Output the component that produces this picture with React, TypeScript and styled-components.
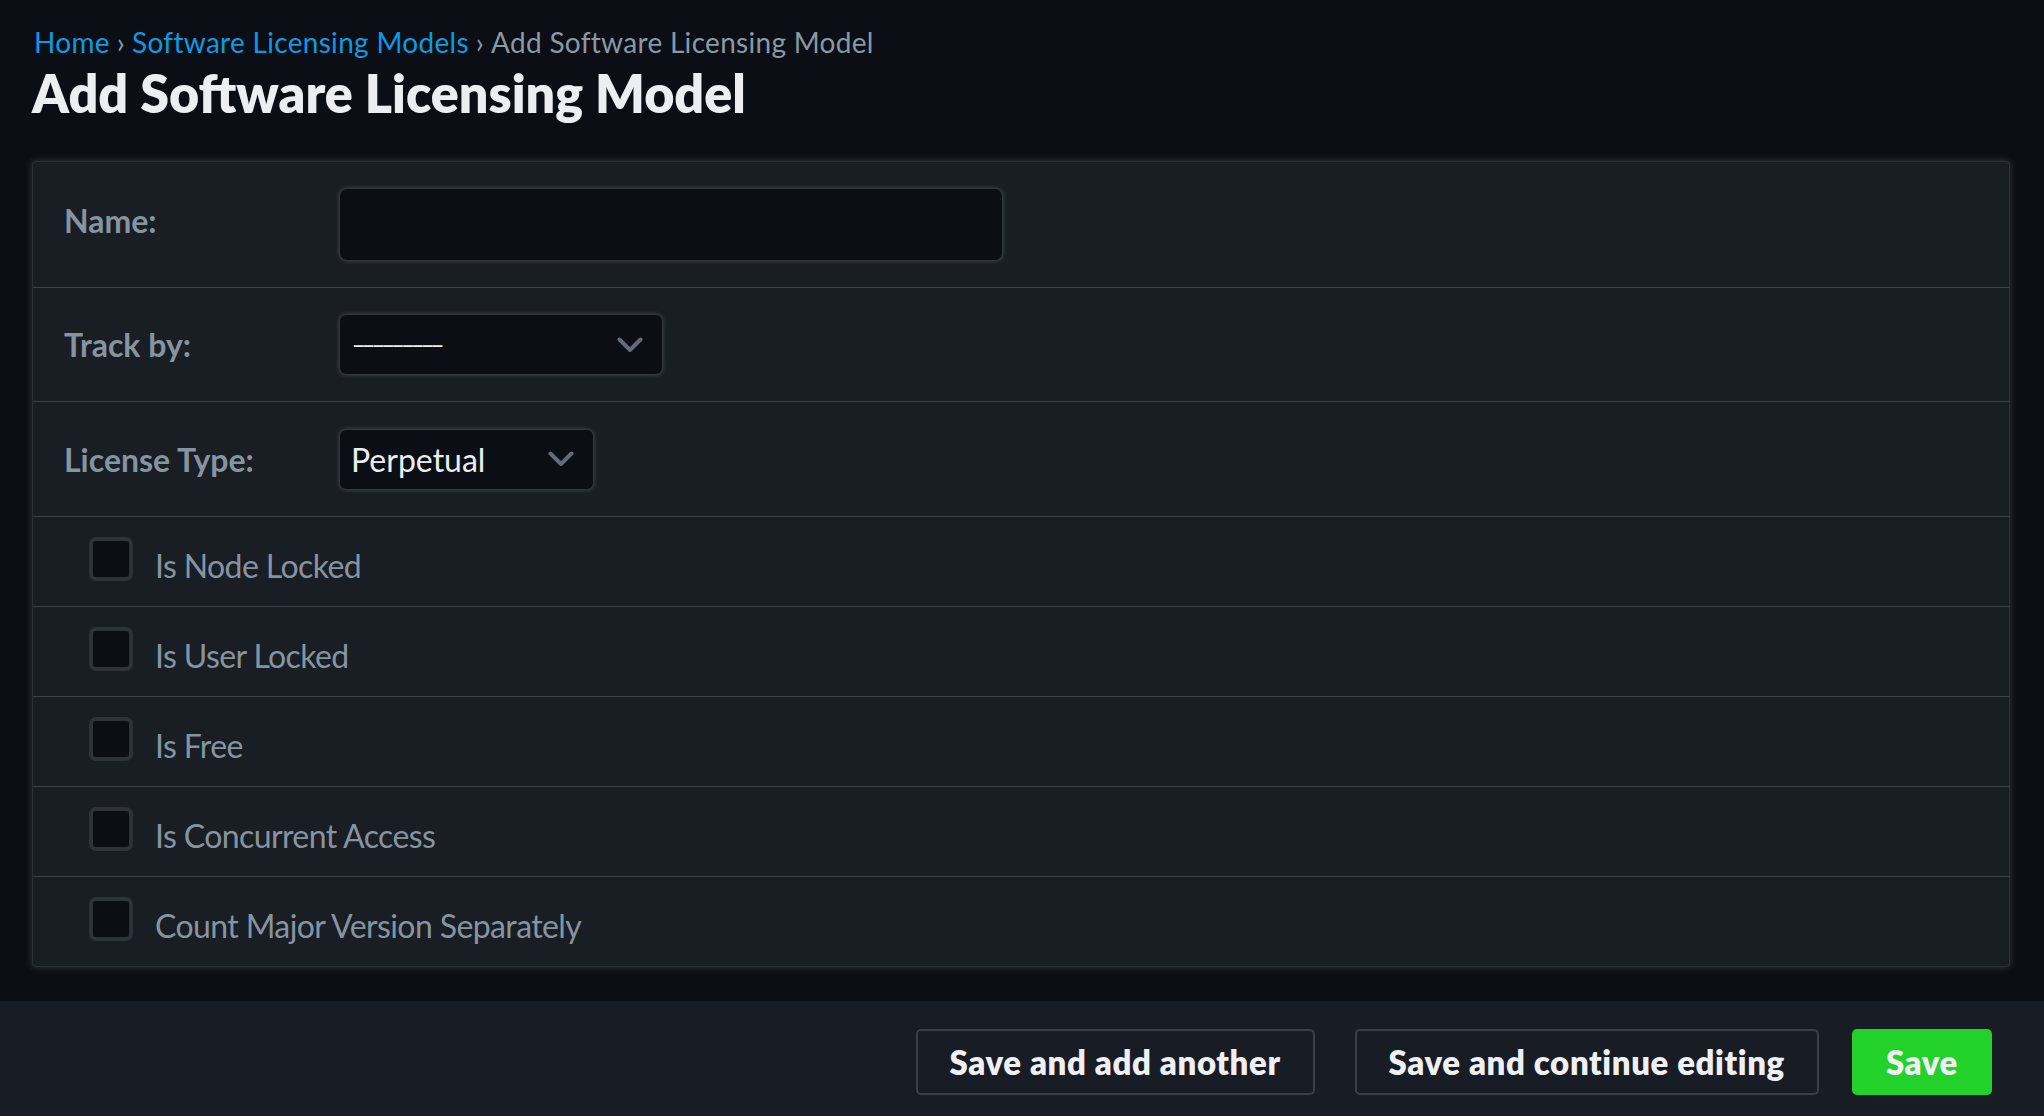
import React from "react";
import { styled, createGlobalStyle } from "styled-components";

const GlobalStyle = createGlobalStyle`
  html, body {
    margin: 0;
    padding: 0;
    background: #0b0e14;
  }
  body {
    font-family: "Lato", "Noto Sans", sans-serif;
    color: #eceef1;
  }
  * { box-sizing: border-box; }
`;

const Page = styled.div`
  min-height: 100vh;
  display: flex;
  flex-direction: column;
`;

const Header = styled.header`
  padding: 26px 32px 0 32px;
`;

const Breadcrumbs = styled.nav`
  font-size: 28px;
  line-height: 32px;
  letter-spacing: 0.3px;
  color: #8b98a5;
  padding-left: 2px;
`;

const Crumb = styled.a`
  color: #0c9be3;
  text-decoration: none;
`;

const Sep = styled.span`
  margin: 0 7px;
  color: #8b98a5;
`;

const Title = styled.h1`
  margin: 4px 0 0 0;
  font-size: 52px;
  line-height: 62px;
  font-weight: 800;
  color: #eceef1;
`;

const Card = styled.section`
  margin: 37px 34px 0 32px;
  background: #191d24;
  border: 1px solid #2c3038;
  border-radius: 4px;
  box-shadow: 0 0 6px 1px rgba(70, 74, 82, 0.55);
`;

const FieldRow = styled.div<{ $height: number }>`
  display: flex;
  align-items: center;
  height: ${({ $height }) => $height}px;
  padding-left: 31px;
  & + & {
    border-top: 1px solid #3d414a;
  }
`;

const Label = styled.label<{ $raise?: number }>`
  width: 276px;
  font-size: 32px;
  font-weight: 700;
  color: #8694a0;
  margin-top: ${({ $raise }) => -($raise ?? 0)}px;
`;

const TextInput = styled.input`
  width: 662px;
  height: 71px;
  background: #0b0e14;
  border: none;
  border-radius: 7px;
  box-shadow: 0 0 4px 1px rgba(120, 125, 135, 0.45);
  outline: none;
  color: #eceef1;
  font-size: 30px;
  padding: 0 12px;
`;

const SelectBox = styled.div<{ $width: number }>`
  width: ${({ $width }) => $width}px;
  height: 59px;
  display: flex;
  align-items: center;
  justify-content: space-between;
  padding: 0 19px 0 11px;
  background: #0b0e14;
  border-radius: 6px;
  box-shadow: 0 0 4px 1px rgba(120, 125, 135, 0.45);
  font-size: 32px;
  color: #eceef1;
  cursor: pointer;
`;

const Dashes = styled.span`
  font-size: 42px;
  font-weight: 300;
  letter-spacing: -5.7px;
  margin-top: -6px;
`;

const CheckRow = styled.div`
  display: flex;
  align-items: center;
  gap: 22px;
  height: 90px;
  padding-left: 56px;
  border-top: 1px solid #3d414a;
`;

const Checkbox = styled.input.attrs({ type: "checkbox" })`
  appearance: none;
  margin: 0;
  width: 44px;
  height: 44px;
  background: #0b0e14;
  border: 4px solid #2e323a;
  border-radius: 7px;
  flex-shrink: 0;
  position: relative;
  top: -3px;
`;

const CheckLabel = styled.label`
  font-size: 32px;
  color: #8694a0;
  letter-spacing: -0.6px;
  padding-top: 8px;
`;

const Footer = styled.footer`
  margin-top: 34px;
  flex: 1;
  min-height: 117px;
  background: #181c24;
  display: flex;
  justify-content: flex-end;
  align-items: flex-start;
  padding: 28px 52px 0 0;
`;

const Button = styled.button<{ $primary?: boolean }>`
  height: 66px;
  padding: 0 32px;
  margin-left: ${({ $primary }) => ($primary ? 33 : 40)}px;
  font-family: "Lato", "Noto Sans", sans-serif;
  font-size: 33px;
  font-weight: 800;
  letter-spacing: 0.6px;
  color: #eef0f3;
  background: ${({ $primary }) => ($primary ? "#22d12a" : "#181c24")};
  border: 2px solid ${({ $primary }) => ($primary ? "#22d12a" : "#3a3e46")};
  border-radius: 5px;
  cursor: pointer;
`;

const Chevron = () => (
  <svg width="26" height="16" viewBox="0 0 26 16" fill="none">
    <polyline
      points="2.5,2.5 13,13 23.5,2.5"
      stroke="#626b77"
      strokeWidth="4"
      strokeLinecap="round"
      strokeLinejoin="round"
    />
  </svg>
);

const checks = [
  "Is Node Locked",
  "Is User Locked",
  "Is Free",
  "Is Concurrent Access",
  "Count Major Version Separately",
];

export default function App() {
  return (
    <Page>
      <GlobalStyle />
      <Header>
        <Breadcrumbs>
          <Crumb href="#">Home</Crumb>
          <Sep>›</Sep>
          <Crumb href="#">Software Licensing Models</Crumb>
          <Sep>›</Sep>
          Add Software Licensing Model
        </Breadcrumbs>
        <Title>Add Software Licensing Model</Title>
      </Header>

      <Card>
        <FieldRow $height={125}>
          <Label htmlFor="name" $raise={8}>Name:</Label>
          <TextInput id="name" type="text" />
        </FieldRow>
        <FieldRow $height={114}>
          <Label>Track by:</Label>
          <SelectBox $width={322}>
            <Dashes>---------</Dashes>
            <Chevron />
          </SelectBox>
        </FieldRow>
        <FieldRow $height={115}>
          <Label>License Type:</Label>
          <SelectBox $width={253}>
            <span>Perpetual</span>
            <Chevron />
          </SelectBox>
        </FieldRow>
        {checks.map((c, i) => (
          <CheckRow key={c}>
            <Checkbox id={"chk" + i} />
            <CheckLabel htmlFor={"chk" + i}>{c}</CheckLabel>
          </CheckRow>
        ))}
      </Card>

      <Footer>
        <Button>Save and add another</Button>
        <Button>Save and continue editing</Button>
        <Button $primary>Save</Button>
      </Footer>
    </Page>
  );
}
